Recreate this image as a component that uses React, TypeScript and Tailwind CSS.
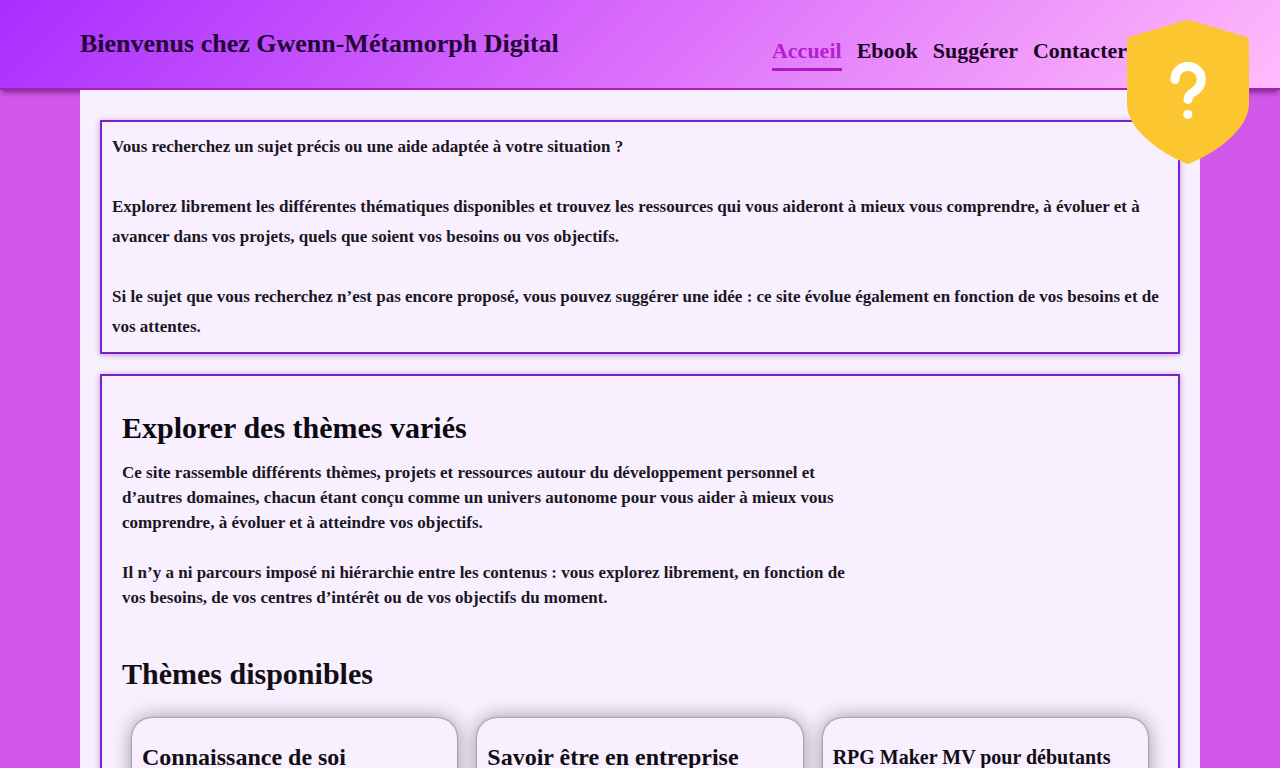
import React from "react";

const links = ["Ebook", "Suggérer", "Contacter"];

const themes = [
  { title: "Connaissance de soi", size: "text-[24px]" },
  { title: "Savoir être en entreprise", size: "text-[24px]" },
  { title: "RPG Maker MV pour débutants", size: "text-[20px]" },
];

function HelpShield() {
  return (
    <button type="button" aria-label="Aide" className="absolute top-5 right-[31px] z-20 cursor-pointer">
      <svg width="122" height="144" viewBox="0 0 122 144" fill="none" aria-hidden="true" className="block">
        <path
          d="M58 .5Q61 -.6 64 .5L119 16.800Q122 18 122 21V84C122 108 92 131 63.500 143.300Q61 144.500 58.500 143.300C30 131 0 108 0 84V21Q0 18 3 16.800Z"
          fill="#fcc630"
        />
        <path
          d="M48 59.500C48 52 53.500 46.500 61 46.500C68.500 46.500 74.300 52 74.300 59.500C74.300 65 71.500 69 66.500 72C63 74.200 61 76 61 79.500"
          stroke="#fff"
          strokeWidth="9"
          strokeLinecap="round"
          strokeLinejoin="round"
        />
        <circle cx="60.800" cy="94.500" r="4.600" fill="#fff" />
      </svg>
    </button>
  );
}

export default function App() {
  return (
    <div className="relative h-screen overflow-hidden bg-[#d156ea] font-['Liberation_Serif',serif] font-bold text-[#1b171f]">
      <header className="h-[90px] border-b-2 border-[#ab1bc1] bg-[linear-gradient(135deg,#a92eff,#db6dfb_50%,#ffbcfb)] px-20 shadow-[0_4px_5px_-2px_rgba(0,0,0,0.5)]">
        <div className="flex h-full items-center justify-between">
          <h1 className="text-[26px] leading-[30px] text-[#220636]">Bienvenus chez Gwenn-Métamorph Digital</h1>
          <nav className="mr-[73px] flex gap-[15px] pt-5 text-[22px] leading-[26px] text-[#1c0425]">
            <a href="#accueil" aria-current="page" className="border-b-3 border-[#ab1bc1] pb-1 text-[#b51fce]">
              Accueil
            </a>
            {links.map((link) => (
              <a key={link} href={"#" + link.toLowerCase()}>
                {link}
              </a>
            ))}
          </nav>
        </div>
      </header>
      <HelpShield />

      <main className="relative mx-20 flex flex-col gap-5 bg-[#f8f0ff] px-5 pt-[30px] pb-5">
        <section className="border-2 border-[#7b20c9] p-2.5 text-[17px] leading-[30px] shadow-[0_1px_6px_rgba(80,30,150,0.4)]">
          <p>Vous recherchez un sujet précis ou une aide adaptée à votre situation ?</p>
          <p className="mt-[30px]">
            Explorez librement les différentes thématiques disponibles et trouvez les ressources qui vous aideront à
            mieux vous comprendre, à évoluer et à avancer dans vos projets, quels que soient vos besoins ou vos
            objectifs.
          </p>
          <p className="mt-[30px]">
            Si le sujet que vous recherchez n’est pas encore proposé, vous pouvez suggérer une idée : ce site évolue
            également en fonction de vos besoins et de vos attentes.
          </p>
        </section>

        <section className="border-2 border-[#7b20c9] p-5 shadow-[0_1px_6px_rgba(80,30,150,0.4)]">
          <h2 className="mt-[15px] text-[30px] leading-[34px] text-[#0c0a10]">Explorer des thèmes variés</h2>
          <div className="mt-[15px] flex max-w-[730px] flex-col gap-[25px] text-[17px] leading-[25px]">
            <p>
              Ce site rassemble différents thèmes, projets et ressources autour du développement personnel et d’autres
              domaines, chacun étant conçu comme un univers autonome pour vous aider à mieux vous comprendre, à évoluer
              et à atteindre vos objectifs.
            </p>
            <p>
              Il n’y a ni parcours imposé ni hiérarchie entre les contenus : vous explorez librement, en fonction de vos
              besoins, de vos centres d’intérêt ou de vos objectifs du moment.
            </p>
          </div>
          <h2 className="mt-[47px] text-[30px] leading-[34px] text-[#110e14]">Thèmes disponibles</h2>
          <div className="mt-[27px] grid grid-cols-3 gap-5 px-2.5">
            {themes.map((theme) => (
              <article
                key={theme.title}
                className="min-h-80 rounded-[20px] bg-[#f8f0ff] px-2.5 pt-[25px] shadow-[0_0_2px_rgba(0,0,0,0.6),0_0_20px_rgba(0,0,0,0.4)]"
              >
                <h3 className={theme.size + " leading-7 text-[#110e14]"}>{theme.title}</h3>
              </article>
            ))}
          </div>
        </section>
      </main>
    </div>
  );
}
